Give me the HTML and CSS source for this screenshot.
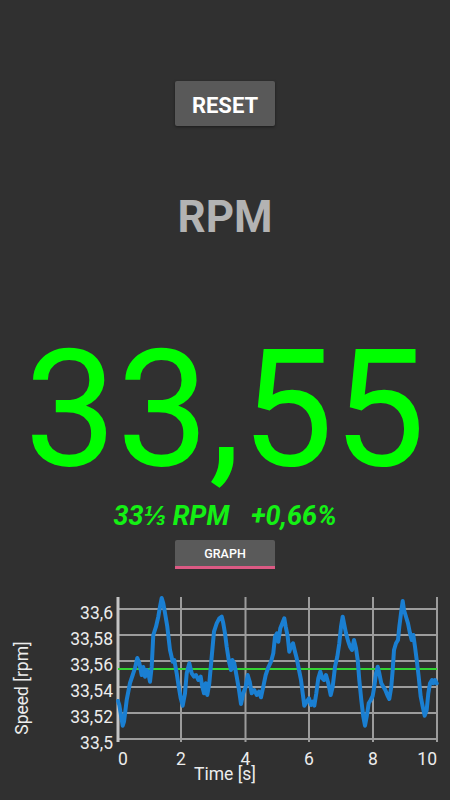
FILE: index.html
```html
<!DOCTYPE html>
<html lang="en">
<head>
<meta charset="utf-8">
<title>RPM</title>
<link rel="stylesheet" href="styles.css">
</head>
<body>
<main class="screen">
  <button class="btn btn-reset">RESET</button>
  <div class="rpm-label">RPM</div>
  <div class="value">33,55</div>
  <div class="sub"><span>33⅓ RPM</span><span>+0,66%</span></div>
  <button class="btn btn-graph">GRAPH</button>
  <svg class="chart" viewBox="0 569 450 231" xmlns="http://www.w3.org/2000/svg">
    <g class="grid">
      <line x1="118" y1="609" x2="437" y2="609"/>
      <line x1="118" y1="635" x2="437" y2="635"/>
      <line x1="118" y1="661" x2="437" y2="661"/>
      <line x1="118" y1="687" x2="437" y2="687"/>
      <line x1="118" y1="713" x2="437" y2="713"/>
      <line x1="118" y1="739" x2="437" y2="739"/>
      <line x1="181" y1="597" x2="181" y2="742"/>
      <line x1="245.5" y1="597" x2="245.5" y2="742"/>
      <line x1="309" y1="597" x2="309" y2="742"/>
      <line x1="373" y1="597" x2="373" y2="742"/>
      <line x1="437" y1="597" x2="437" y2="742"/>
    </g>
    <line class="axis" x1="118" y1="597" x2="118" y2="742"/>
    <line class="target" x1="118" y1="669" x2="437" y2="669"/>
    <polyline class="series" points="118,701 119.3,705 122.7,725.7 124,721.7 126.7,700 130,683 132.7,675 135,668 137.3,658 139.3,663 141.7,675 143.3,667 145,676.7 146.7,670 148.3,673 150,681.7 151.7,666.7 153.3,635 156,626.7 158.3,616.7 160,606.7 161.7,598 163.3,603.3 165,613 167.3,626.7 170,650 172.7,661.7 174.3,660 176.7,673.3 178.7,686.7 180.7,698.3 182.7,705.7 185,693.3 186.7,673.3 189.3,663.3 191.7,673.3 194,676.7 196,675 198.3,680 200.7,676.7 202.3,686.7 204,693.3 205.7,683.3 207.3,695 209.3,683.3 211.7,656.7 214,631.7 216.7,623.3 219.3,618.3 221.7,616.7 223.3,623.3 225,633.3 226.7,646.7 229,661.7 231,670 232.3,660 234.3,663.3 236.7,676.7 239,690 241,704 243.3,693.3 245.7,686.7 247.7,675 249.7,681.7 251.7,693.3 254.3,690 256.7,695 259,691.7 261,697.3 263.3,686.7 265.7,675 268.3,667.3 271,661.7 273.3,653.3 275,636.7 277,633.3 278.3,641.7 280.3,628.3 282.3,623.3 284.3,618.3 285.7,626.7 287.7,636.7 289.3,651.7 291,646.7 293,643.3 295,651.7 296.7,658.3 299,670 301,680 302.7,693.3 304.3,705.7 306.7,701.7 309,698.3 311,705 313,701.7 314.3,705.7 316.3,693.3 318.3,678.3 320.3,671.7 322.3,678.3 324,680 326,675 328.3,683.3 330.7,695 332.7,686.7 335,666.7 337.3,656.7 339.3,643.3 341,626.7 342.7,616.7 344,623.3 346,633.3 348.3,641.7 350,646.7 352,650 354,640 356,648.3 357.7,660 359.3,680 361.3,700 363.3,716.7 365,725.7 366.7,716.7 368.7,703.3 370.7,700 372.7,696 374.3,686.7 376,673.3 377.7,666.7 379.3,673.3 381.3,683.3 383.3,686.7 385.3,690 387.3,695 389.3,699 391.3,686.7 392.7,670 394,650 396,643.3 398,640 399.3,626.7 401,613.3 402.7,601 404,610 406,616.7 408,623.3 410,633.3 411.7,640 413.3,635 415,646.7 416.7,660 418.7,676.7 420.7,696.7 422.7,706.7 424.7,715.7 426.7,710 428.3,693.3 430,683.3 432,680 433.3,683.3 435,680 436.7,683.3"/>
    <g class="ticks-y">
      <text x="113" y="618.5">33,6</text>
      <text x="113" y="644.5">33,58</text>
      <text x="113" y="670.5">33,56</text>
      <text x="113" y="696.5">33,54</text>
      <text x="113" y="722.5">33,52</text>
      <text x="113" y="748.5">33,5</text>
    </g>
    <g class="ticks-x">
      <text class="start" x="118" y="765">0</text>
      <text x="181" y="765">2</text>
      <text x="245.5" y="765">4</text>
      <text x="309" y="765">6</text>
      <text x="373" y="765">8</text>
      <text class="end" x="437" y="765">10</text>
    </g>
    <text class="axis-title" x="225" y="780">Time [s]</text>
    <text class="axis-title" transform="translate(27.5 688) rotate(-90)">Speed [rpm]</text>
  </svg>
</main>
</body>
</html>
```
FILE: styles.css
```css
html, body {
  margin: 0;
  padding: 0;
}

body {
  background: #303030;
  font-family: Roboto, "Liberation Sans", sans-serif;
  width: 450px;
  height: 800px;
  overflow: hidden;
}

.screen {
  display: flex;
  flex-direction: column;
  align-items: center;
  padding-top: 81px;
}

.btn {
  font-family: Roboto, "Liberation Sans", sans-serif;
  border: 0;
  margin: 0;
  color: #ffffff;
  display: flex;
  align-items: center;
  justify-content: center;
  box-sizing: border-box;
  padding: 0;
}

.btn-reset {
  width: 100px;
  height: 45px;
  padding-top: 3px;
  background: #595959;
  border-radius: 2px;
  font-size: 22px;
  font-weight: 700;
  box-shadow: 0 1px 3px rgba(0, 0, 0, 0.45);
}

.rpm-label {
  margin-top: 65px;
  font-size: 44px;
  line-height: 52px;
  font-weight: 700;
  color: #b3b3b3;
}

.value {
  margin-top: 81px;
  font-size: 164px;
  line-height: 170px;
  color: #00ff00;
}

.sub {
  margin-top: 7px;
  display: flex;
  gap: 22px;
  font-size: 27px;
  line-height: 30px;
  font-weight: 700;
  font-style: italic;
  color: #14f014;
}

.btn-graph {
  margin-top: 9px;
  width: 100px;
  height: 29px;
  background: #5a5a5a;
  border-radius: 2px 2px 0 0;
  border-bottom: 3px solid #dc5a84;
  font-size: 12.5px;
  font-weight: 500;
}

.chart {
  display: block;
  width: 450px;
  height: 231px;
}

.grid line {
  stroke: #9c9c9c;
  stroke-width: 2;
}

.axis {
  stroke: #c4c4c4;
  stroke-width: 3;
}

.target {
  stroke: #34d434;
  stroke-width: 2;
}

.series {
  fill: none;
  stroke: #1a7fd2;
  stroke-width: 4;
  stroke-linejoin: round;
  stroke-linecap: round;
}

.chart text {
  font-family: Roboto, "Liberation Sans", sans-serif;
  font-size: 17.5px;
  fill: #ececec;
}

.ticks-y text {
  text-anchor: end;
}

.ticks-x text {
  text-anchor: middle;
}

.ticks-x text.start {
  text-anchor: start;
}

.ticks-x text.end {
  text-anchor: end;
}

.chart .axis-title {
  text-anchor: middle;
}
```
